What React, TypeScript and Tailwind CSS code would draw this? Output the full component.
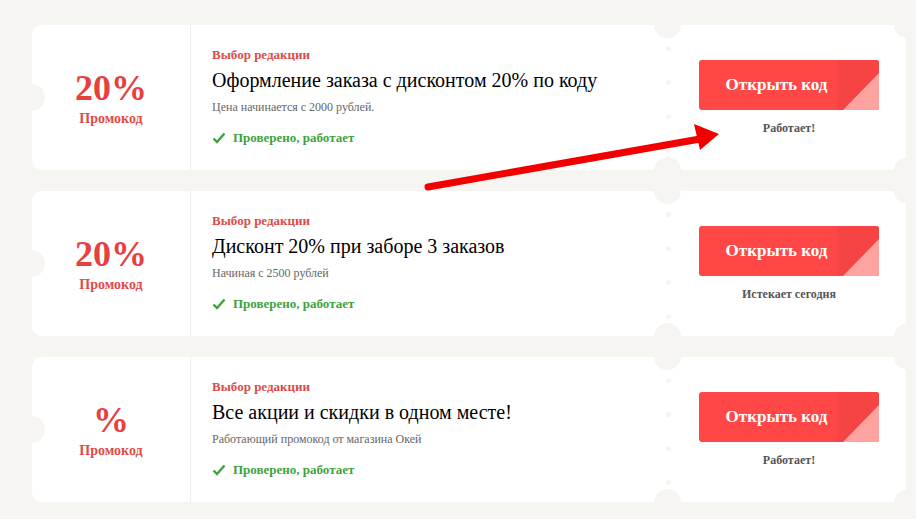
import { Fragment } from "react";

type Offer = {
  value: string;
  title: string;
  note: string;
  status: string;
};

const offers: Offer[] = [
  {
    value: "20%",
    title: "Оформление заказа с дисконтом 20% по коду",
    note: "Цена начинается с 2000 рублей.",
    status: "Работает!",
  },
  {
    value: "20%",
    title: "Дисконт 20% при заборе 3 заказов",
    note: "Начиная с 2500 рублей",
    status: "Истекает сегодня",
  },
  {
    value: "%",
    title: "Все акции и скидки в одном месте!",
    note: "Работающий промокод от магазина Окей",
    status: "Работает!",
  },
];

function Check() {
  return (
    <svg width="14" height="12" viewBox="0 0 14 12" className="shrink-0">
      <polyline points="1.5,6.5 5,10 12.5,1.5" fill="none" stroke="#3da33d" strokeWidth="2.4" />
    </svg>
  );
}

function OfferCard({ offer }: { offer: Offer }) {
  return (
    <div className="relative flex h-[145px] w-[874px] rounded-[10px] bg-white">
      {/* ticket notches */}
      <span className="absolute left-[-14px] top-[59px] h-[27px] w-[27px] rounded-full bg-[#f6f5f1]" />
      <span className="absolute left-[622px] top-[-14px] h-[27px] w-[27px] rounded-full bg-[#f6f5f1]" />
      <span className="absolute left-[622px] bottom-[-14px] h-[27px] w-[27px] rounded-full bg-[#f6f5f1]" />
      <span className="absolute right-[-12px] top-[-12px] h-[24px] w-[24px] rounded-full bg-[#f6f5f1]" />
      <span className="absolute right-[-12px] bottom-[-12px] h-[24px] w-[24px] rounded-full bg-[#f6f5f1]" />
      {/* perforation dots */}
      <div className="absolute left-[634px] top-[21px] flex flex-col gap-[29px]">
        <span className="h-[5px] w-[5px] rounded-full bg-[#f5f4f0]" />
        <span className="h-[5px] w-[5px] rounded-full bg-[#f5f4f0]" />
        <span className="h-[5px] w-[5px] rounded-full bg-[#f5f4f0]" />
        <span className="h-[5px] w-[5px] rounded-full bg-[#f5f4f0]" />
      </div>

      <div className="flex w-[159px] shrink-0 flex-col items-center justify-center border-r border-[#efefef] text-[#e6413f]">
        <div className="text-[36px] font-bold leading-[40px]">{offer.value}</div>
        <div className="mt-[2px] text-[14px] font-bold leading-[18px] text-[#e04a48]">Промокод</div>
      </div>

      <div className="flex flex-1 flex-col pl-[21px] pt-[22px]">
        <div className="text-[13px] font-bold leading-[16px] text-[#dc4b4b]">Выбор редакции</div>
        <div className="mt-[4px] text-[20px] leading-[26px] text-black">{offer.title}</div>
        <div className="mt-[6px] text-[12px] leading-[16px] text-[#666]">{offer.note}</div>
        <div className="mt-[15px] flex items-center gap-[7px] text-[13px] font-bold leading-[16px] text-[#3da33d]">
          <Check />
          Проверено, работает
        </div>
      </div>

      <div className="flex w-[238px] shrink-0 flex-col items-center justify-center pl-[4px]">
        <button className="relative h-[50px] w-[180px] overflow-hidden rounded-[3px] bg-[#ff4747] pr-[25px] text-[17px] font-bold text-white">
          <span className="absolute right-0 top-0 h-[50px] w-[42px] bg-[#f64343]" />
          <span className="absolute bottom-0 right-0 h-0 w-0 border-b-[37px] border-l-[36px] border-b-[#ffa3a1] border-l-transparent" />
          <span className="relative">Открыть код</span>
        </button>
        <div className="mt-[10px] text-[12px] font-bold leading-[16px] text-[#555]">{offer.status}</div>
      </div>
    </div>
  );
}

export default function App() {
  return (
    <div
      className="relative h-[519px] w-[916px] overflow-hidden bg-[#f6f5f1] pl-[32px] pt-[25px]"
      style={{ fontFamily: '"Liberation Serif", "Times New Roman", serif' }}
    >
      <div className="flex flex-col gap-[21px]">
        {offers.map((o, i) => (
          <Fragment key={i}>
            <OfferCard offer={o} />
          </Fragment>
        ))}
      </div>

      {/* pointer arrow */}
      <svg className="pointer-events-none absolute left-0 top-0" width="916" height="519">
        <line x1="428" y1="187" x2="700" y2="139" stroke="#f20000" strokeWidth="7" strokeLinecap="round" />
        <polygon points="719,134 694,124 700,150" fill="#f20000" />
      </svg>
    </div>
  );
}
